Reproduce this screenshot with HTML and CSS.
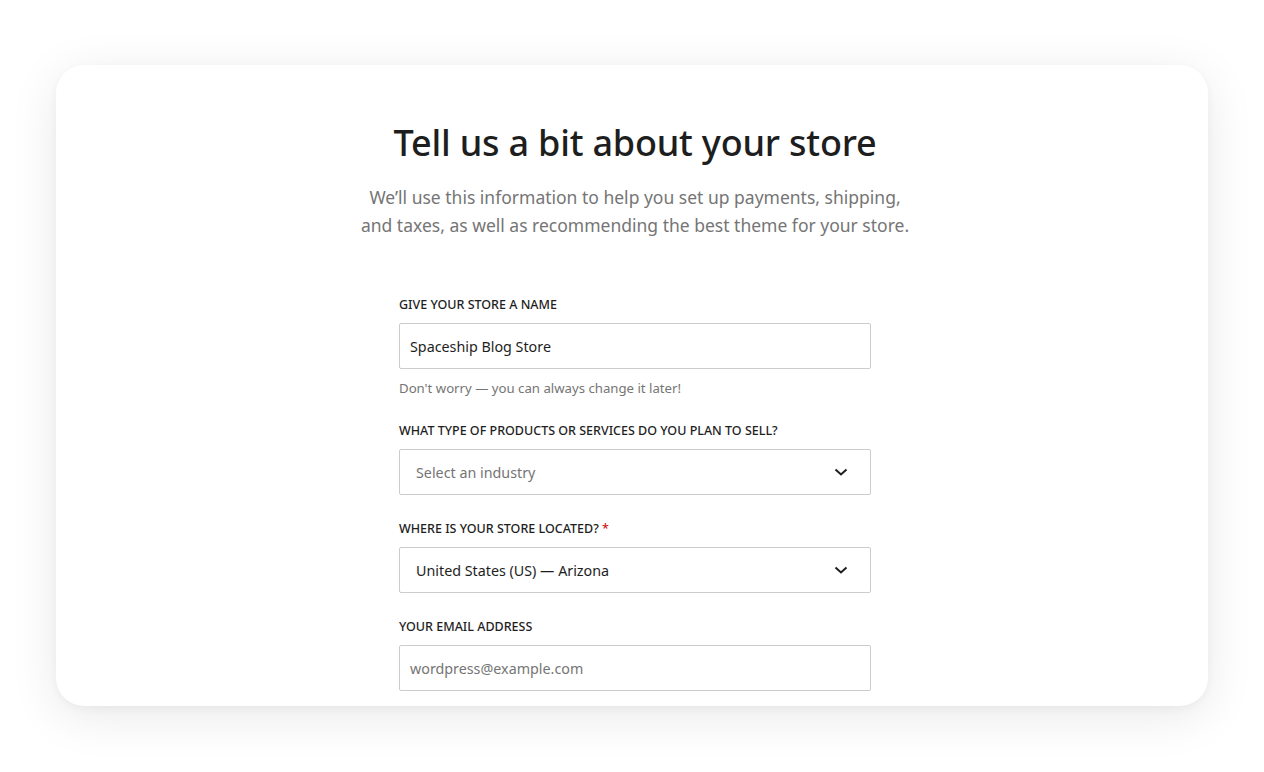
FILE: index.html
```html
<!DOCTYPE html>
<html lang="en">
<head>
  <meta charset="UTF-8" />
  <title>Store details</title>
  <meta name="viewport" content="width=device-width, initial-scale=1" />
  <link rel="stylesheet" href="styles.css">
</head>
<body>
  <div class="card">
    <h1 class="title">Tell us a bit about your store</h1>
    <p class="lead">We’ll use this information to help you set up payments, shipping,<br>and taxes, as well as recommending the best theme for your store.</p>

    <form class="form">
      <div class="field">
        <label class="label">Give your store a name</label>
        <div class="control">Spaceship Blog Store</div>
        <p class="help">Don't worry — you can always change it later!</p>
      </div>

      <div class="field">
        <label class="label">What type of products or services do you plan to sell?</label>
        <div class="control select placeholder">
          <span>Select an industry</span>
          <svg class="chevron" width="14" height="8" viewBox="0 0 14 8"><path d="M1.5 1.5 7 6.5l5.5-5" fill="none" stroke="#1e1e1e" stroke-width="2"/></svg>
        </div>
      </div>

      <div class="field">
        <label class="label">Where is your store located? <span class="req">*</span></label>
        <div class="control select">
          <span>United States (US) — Arizona</span>
          <svg class="chevron" width="14" height="8" viewBox="0 0 14 8"><path d="M1.5 1.5 7 6.5l5.5-5" fill="none" stroke="#1e1e1e" stroke-width="2"/></svg>
        </div>
      </div>

      <div class="field">
        <label class="label">Your email address</label>
        <div class="control email">wordpress@example.com</div>
      </div>
    </form>
  </div>
</body>
</html>
```

FILE: styles.css
```css
html, body { background: #fff; }
body {
  margin: 0;
  min-height: 772px;
  padding-top: 65px;
  box-sizing: border-box;
  font-family: "Noto Sans", "Open Sans", sans-serif;
  color: #1e1e1e;
}
.card {
  margin-left: 56px;
  width: 1152px;
  height: 641px;
  box-sizing: border-box;
  padding: 56px 0 0 6px;
  background: #fff;
  border-radius: 28px;
  box-shadow: 0 10px 50px rgba(0, 0, 0, 0.09), 0 3px 10px rgba(0, 0, 0, 0.04);
  overflow: hidden;
  display: flex;
  flex-direction: column;
  align-items: center;
}
.title {
  margin: 0;
  font-size: 36px;
  font-weight: 500;
  line-height: 1.2;
  letter-spacing: -0.2px;
  color: #1e1e1e;
}
.lead {
  margin: 19px 0 0;
  font-size: 17.5px;
  line-height: 28px;
  color: #757575;
  text-align: center;
}
.form { width: 472px; margin-top: 58px; }
.field { margin-bottom: 26px; }
.label {
  display: block;
  font-size: 12.5px;
  font-weight: 500;
  text-transform: uppercase;
  line-height: 16px;
  margin-bottom: 10px;
  color: #1e1e1e;
}
.req { color: #cc1818; }
.control {
  height: 46px;
  box-sizing: border-box;
  border: 1px solid #ccc;
  border-radius: 2px;
  padding: 0 10px;
  display: flex;
  align-items: center;
  font-size: 14.3px;
  color: #1e1e1e;
}
.select { padding: 0 22px 0 16px; justify-content: space-between; }
.placeholder { color: #757575; }
.email { color: #757575; }
.help {
  margin: 10px 0 0;
  font-size: 13.2px;
  color: #757575;
}
```
